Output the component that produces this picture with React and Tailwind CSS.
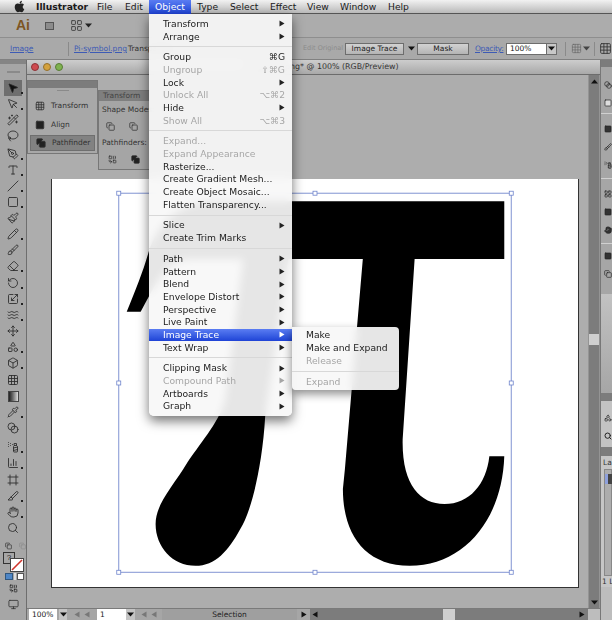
import React from "react";
import { FaApple } from "react-icons/fa";
import {
  MousePointer2, MousePointer, Wand2, Lasso, PenTool, Type, Slash, Square, Paintbrush, Pencil, Brush, Eraser,
  RotateCcw, Scaling, Waves, Move, Shapes, Box, Grid3x3, Pipette, Blend, SprayCan, ChartColumn, Frame, Slice, Hand, Search,
  Monitor, Copy, LayoutGrid, Combine,
} from "lucide-react";

const Tri = ({ c = "#222" }) => (
  <svg width="6" height="7" viewBox="0 0 6 7" className="shrink-0"><path d="M0.5 0.5 L5.5 3.5 L0.5 6.5Z" fill={c} /></svg>
);
const Down = ({ c = "#111" }) => (
  <svg width="7" height="5" viewBox="0 0 7 5" className="shrink-0"><path d="M0 0.5 H7 L3.5 4.5Z" fill={c} /></svg>
);
const Up = ({ c = "#111" }) => (
  <svg width="7" height="5" viewBox="0 0 7 5" className="shrink-0"><path d="M0 4.5 H7 L3.5 0.5Z" fill={c} /></svg>
);
const TriL = ({ c = "#222" }) => (
  <svg width="6" height="7" viewBox="0 0 6 7" className="shrink-0"><path d="M5.5 0.5 L0.5 3.5 L5.5 6.5Z" fill={c} /></svg>
);

const menuGroups = [
  [["Transform", "a"], ["Arrange", "a"]],
  [["Group", "⌘G"], ["Ungroup", "⇧⌘G", 1], ["Lock", "a"], ["Unlock All", "⌥⌘2", 1], ["Hide", "a"], ["Show All", "⌥⌘3", 1]],
  [["Expand...", "", 1], ["Expand Appearance", "", 1], ["Rasterize...", ""], ["Create Gradient Mesh...", ""], ["Create Object Mosaic...", ""], ["Flatten Transparency...", ""]],
  [["Slice", "a"], ["Create Trim Marks", ""]],
  [["Path", "a"], ["Pattern", "a"], ["Blend", "a"], ["Envelope Distort", "a"], ["Perspective", "a"], ["Live Paint", "a"], ["Image Trace", "a", 0, 1], ["Text Wrap", "a"]],
  [["Clipping Mask", "a"], ["Compound Path", "a", 1], ["Artboards", "a"], ["Graph", "a"]],
];

function Sep() {
  return <div className="h-[8px] flex items-center"><div className="h-px w-full bg-[#d8d8d8]" /></div>;
}

function MenuRow({ label, right, dis, active }) {
  const text = active ? "text-white" : dis ? "text-[#a6a6a6]" : "text-[#1c1c1c]";
  const bg = active ? "bg-gradient-to-b from-[#5a7cf2] to-[#1f42d6]" : "";
  return (
    <div className={`h-[12.7px] flex items-center justify-between pl-[14px] pr-[7px] ${text} ${bg}`}>
      <span>{label}</span>
      {right === "a" ? <Tri c={active ? "#fff" : dis ? "#a6a6a6" : "#222"} /> : <span className={dis ? "text-[#a6a6a6]" : "text-[#222]"}>{right}</span>}
    </div>
  );
}

function ObjectMenu() {
  return (
    <div className="absolute left-[149px] top-[14px] w-[143px] h-[402px] pt-[3.4px] rounded-b-[5px] bg-[#f8f8f8]/93 backdrop-blur-[4px] shadow-[0_5px_12px_rgba(0,0,0,0.55)] text-[9.2px] font-['DejaVu_Sans',sans-serif] z-20">
      {menuGroups.map((g, i) => (
        <React.Fragment key={i}>
          {i > 0 && <Sep />}
          {g.map((m) => <MenuRow key={m[0]} label={m[0]} right={m[1]} dis={m[2]} active={m[3]} />)}
        </React.Fragment>
      ))}
    </div>
  );
}

function SubMenu() {
  return (
    <div className="absolute left-[292px] top-[327px] w-[107px] h-[63px] pt-[2px] rounded-r-[4px] rounded-bl-[4px] bg-[#f8f8f8]/93 backdrop-blur-[4px] shadow-[0_4px_10px_rgba(0,0,0,0.45)] text-[9.2px] font-['DejaVu_Sans',sans-serif] z-20">
      <MenuRow label="Make" />
      <MenuRow label="Make and Expand" />
      <MenuRow label="Release" dis />
      <Sep />
      <MenuRow label="Expand" dis />
    </div>
  );
}

function MenuBar() {
  return (
    <div className="h-[14px] shrink-0 flex items-center bg-gradient-to-b from-[#f2f2f2] to-[#b9b9b9] border-b border-[#555] text-[9.2px] text-[#1a1a1a] font-['DejaVu_Sans',sans-serif] pl-[13px] z-10">
      <FaApple className="w-[13px] h-[13px] text-[#222]" />
      <span className="ml-[10px] font-bold w-[49px] whitespace-nowrap">Illustrator</span>
      <span className="ml-[12px] w-[16px]">File</span>
      <span className="ml-[12px] w-[17px]">Edit</span>
      <span className="ml-[7px] h-[14px] w-[42px] flex items-center justify-center text-white bg-gradient-to-b from-[#5a7cf2] to-[#1f42d6]">Object</span>
      <span className="ml-[6px] w-[21px]">Type</span>
      <span className="ml-[12px] w-[28px]">Select</span>
      <span className="ml-[12px] w-[25px]">Effect</span>
      <span className="ml-[12px] w-[21px]">View</span>
      <span className="ml-[12px] w-[36px]">Window</span>
      <span className="ml-[12px] w-[20px]">Help</span>
    </div>
  );
}

function AppBar() {
  return (
    <div className="h-[24px] shrink-0 flex items-center bg-[#acacac] border-b border-[#8e8e8e] pl-[16px]">
      <span className="text-[#7d5523] font-bold text-[14px] font-['Liberation_Sans',sans-serif] w-[29px]">Ai</span>
      <span className="w-[9px] h-[8px] border border-[#555] bg-[#8c8c8c]" />
      <span className="ml-[16px] flex items-center gap-[2px] text-[#444]"><LayoutGrid size={13} strokeWidth={1.8} /><Down c="#222" /></span>
    </div>
  );
}

function Btn({ className, children }) {
  return <div className={`h-[12px] flex items-center justify-center bg-gradient-to-b from-[#d2d2d2] to-[#b4b4b4] border border-[#6d6d6d] text-[7.5px] text-[#222] ${className}`}>{children}</div>;
}

function ControlBar() {
  return (
    <div className="h-[22px] shrink-0 flex items-center bg-[#a9a9a9] border-b border-[#808080] text-[7.5px] font-['DejaVu_Sans',sans-serif] text-[#333] pl-[10px] overflow-hidden">
      <span className="text-[#3d5bb5] underline w-[58px]">Image</span>
      <span className="w-px h-[14px] bg-[#8a8a8a]" />
      <span className="ml-[5px] text-[#3d5bb5] underline w-[54px] whitespace-nowrap">Pi-symbol.png</span>
      <span className="whitespace-nowrap w-[175px]">Transparent</span>
      <span className="whitespace-nowrap text-[#8c8c8c] text-[6.5px] w-[41px]">Edit Original</span>
      <span className="w-[1px]" />
      <Btn className="w-[59px]">Image Trace</Btn>
      <span className="ml-[4px] w-[9px]"><Down /></span>
      <Btn className="w-[52px]">Mask</Btn>
      <span className="ml-[6px] text-[#3d5bb5] underline w-[31px] tracking-[-0.3px]">Opacity:</span>
      <span className="h-[12px] w-[41px] bg-white border border-[#6d6d6d] text-[#222] pl-[3px] flex items-center">100%</span>
      <span className="h-[12px] w-[10px] bg-[#c8c8c8] border border-[#6d6d6d] border-l-0 flex items-center justify-center"><Down /></span>
      <span className="w-px h-[14px] bg-[#8a8a8a] ml-[8px]" />
      <span className="ml-[5px] flex items-center gap-[1px] text-[#666]"><Grid3x3 size={11} strokeWidth={1.4} /><Down c="#444" /></span>
      <span className="w-px h-[14px] bg-[#8a8a8a] ml-[4px]" />
      <span className="ml-[4px] text-[#333]"><Grid3x3 size={13} strokeWidth={1.6} /></span>
    </div>
  );
}

const groups = [
  { mt: "", tools: [[MousePointer2, 1, 1], [MousePointer, 1], [Wand2], [Lasso]] },
  { mt: "mt-[2px]", tools: [[PenTool, 1], [Type, 1], [Slash, 1], [Square, 1], [Paintbrush], [Pencil, 1], [Brush], [Eraser, 1]] },
  { mt: "mt-[1px]", tools: [[RotateCcw, 1], [Scaling, 1], [Waves, 1], [Move], [Shapes, 1], [Box, 1]] },
  { mt: "mt-[1px]", tools: [[Grid3x3], ["grad"], [Pipette, 1], [Blend]] },
  { mt: "mt-[3px]", tools: [[SprayCan, 1], [ChartColumn, 1]] },
  { mt: "mt-[1px]", tools: [[Frame], [Slice, 1], [Hand, 1], [Search]] },
];

function Toolbox() {
  return (
    <div className="w-[27px] shrink-0 bg-[#a6a6a6] border-r border-[#6e6e6e] flex flex-col">
      <div className="h-[4px] bg-[#858585]" />
      <div className="h-[16px] flex items-center justify-center"><div className="w-[13px] h-[2px] bg-[#8a8a8a]" /></div>
      {groups.map((g, i) => (
        <div key={i} className={g.mt}>
          {g.tools.map(([Ic, dot, sel], j) => (
            <div key={j} className={`relative h-[16px] mx-[4px] flex items-center justify-center text-[#2b2b2b] ${sel ? "bg-[#6f6f6f]" : ""}`}>
              {Ic === "grad" ? <span className="w-[11px] h-[11px] bg-gradient-to-r from-[#222] to-[#ddd] border border-[#444]" /> :
                <Ic size={12} strokeWidth={1.7} fill={sel ? "#111" : "none"} />}
              {dot && <span className="absolute right-[-1px] bottom-[2px] w-[2px] h-[2px] bg-[#222]" />}
            </div>
          ))}
        </div>
      ))}
      <div className="mt-[4px] pl-[5px] flex items-center gap-[7px] h-[11px]">
        <Copy size={8} className="text-[#222]" /><Copy size={8} className="text-[#888]" />
      </div>
      <div className="relative h-[24px] mt-[-1px]">
        <span className="absolute left-[3px] top-[2px] w-[12px] h-[12px] border border-[#333] bg-[#a6a6a6] text-[8px] leading-[10px] text-center text-[#222] font-['Liberation_Sans',sans-serif]">?</span>
        <svg className="absolute left-[10px] top-[8px]" width="14" height="14" viewBox="0 0 14 14">
          <rect x="0.5" y="0.5" width="13" height="13" fill="#fff" stroke="#444" />
          <path d="M2 12 L12 2" stroke="#d0342c" strokeWidth="1.6" />
        </svg>
      </div>
      <div className="h-[8px] pl-[5px] flex gap-[1px] mt-[-1px]">
        <span className="w-[8px] h-[7px] bg-[#4e86c6] border border-[#31577f]" />
        <span className="w-[2px] h-[7px] bg-[#ddd]" />
        <span className="w-[7px] h-[7px] bg-white border border-[#555]" />
      </div>
      <div className="h-[14px] flex items-center justify-center"><Combine size={9} className="text-[#222]" /></div>
      <div className="mt-[4px] flex justify-center text-[#333]"><Monitor size={11} strokeWidth={1.8} /></div>
    </div>
  );
}

function Artwork() {
  const hs = [[118, 193], [315, 193], [512, 193], [118, 383.5], [512, 383.5], [118, 573.5], [315, 573.5], [512, 573.5]];
  return (
    <svg className="absolute inset-0 w-full h-full" viewBox="51 179 528 409">
      <path
        fill="#000"
        d="M126 312 C135 290 143 270 148 252 C158 222 180 201 215 201 L505 201 L505 259 L415 259 L403 440 C402 485 420 505 445 505 C470 505 487 485 490 457 L505 457 C503 520 465 567 410 567 C365 567 343 535 343 490 L345 470 L363 259 L288 259 L265 417 C262 470 250 515 240 530 C228 552 215 567 195 567 C172 567 155 548 155 525 C155 505 172 488 187 463 C203 440 220 420 225 400 L243 259 L190 259 C165 259 155 285 140 312 Z"
      />
      <rect x="118" y="193" width="394" height="380.5" fill="none" stroke="#8093d2" strokeWidth="1" />
      {hs.map(([x, y], i) => (
        <rect key={i} x={x - 2} y={y - 2} width="4" height="4" fill="#fff" stroke="#6f84cc" strokeWidth="0.8" />
      ))}
    </svg>
  );
}

function StatusBar() {
  const Nav = ({ w }) => (
    <span className={`flex items-center justify-center gap-[4px] ${w}`}><span className="opacity-40 flex gap-[4px]"><TriL c="#333" /><TriL c="#333" /></span></span>
  );
  return (
    <div className="h-[12px] shrink-0 flex bg-[#a6a6a6] border-t border-[#7a7a7a] text-[7.5px] font-['DejaVu_Sans',sans-serif] text-[#222]">
      <span className="ml-[2px] w-[28px] bg-white pl-[3px] flex items-center">100%</span>
      <span className="ml-[2px] w-[8px] bg-[#c4c4c4] flex items-center justify-center"><Down /></span>
      <Nav w="w-[30px]" />
      <span className="w-[29px] bg-white pl-[3px] flex items-center">1</span>
      <span className="w-[9px] bg-[#c4c4c4] flex items-center justify-center"><Down /></span>
      <Nav w="w-[27px]" />
      <span className="w-[135px] bg-[#9f9f9f] flex items-center justify-center">Selection</span>
      <span className="w-[13px] flex items-center justify-center"><Tri c="#111" /></span>
      <span className="w-[278px] bg-[#7c7c7c] flex items-center pl-[2px] pr-[3px]">
        <TriL c="#111" />
        <span className="ml-[125px] w-[12px] h-full bg-[#cfcfcf]" />
        <span className="flex-1" />
        <Tri c="#111" />
      </span>
      <span className="flex-1 bg-[#bdbdbd]" />
    </div>
  );
}

function DocWindow() {
  return (
    <div className="flex-1 min-w-0 flex flex-col">
      <div className="h-[15px] shrink-0 relative flex items-center justify-center bg-gradient-to-b from-[#cdcdcd] to-[#a9a9a9] border-b border-[#6c6c6c] text-[7.9px] text-[#333] font-['DejaVu_Sans',sans-serif]">
        <span className="absolute left-[4px] flex gap-[4px]">
          <span className="w-[8px] h-[8px] rounded-full bg-[#cf4b50] border border-[#8d3338]" />
          <span className="w-[8px] h-[8px] rounded-full bg-[#d4a23f] border border-[#94702c]" />
          <span className="w-[8px] h-[8px] rounded-full bg-[#7fb24f] border border-[#587c36]" />
        </span>
        <span className="ml-[16px] whitespace-nowrap">Pi-symbol.png* @ 100% (RGB/Preview)</span>
      </div>
      <div className="flex-1 min-h-0 flex">
        <div className="flex-1 min-w-0 bg-[#adadad] pl-[24px] pt-[104px]">
          <div className="relative w-[528px] h-[409px] bg-white border-l border-b border-r border-[#333]">
            <Artwork />
          </div>
        </div>
        <div className="w-[12px] shrink-0 bg-[#7c7c7c] border-x border-[#949494] flex flex-col items-center pt-[4px] pb-[3px]">
          <Up />
          <span className="mt-[250px] w-full h-[11px] bg-[#cfcfcf]" />
          <span className="flex-1" />
          <Down />
        </div>
      </div>
      <StatusBar />
    </div>
  );
}

function DockIcon({ children }) {
  return <div className="h-[18px] pl-[3px] flex items-center text-[#222] overflow-hidden">{children}</div>;
}

function RightDock() {
  return (
    <div className="w-[12px] shrink-0 flex flex-col bg-[#a6a6a6] border-l border-[#777] overflow-hidden">
      <div className="h-[7px] bg-[#7c7c7c]" />
      <div className="pt-[9px] pb-[1px] border-b border-[#d0d0d0]">
        <DockIcon><Blend size={14} /></DockIcon>
        <DockIcon><Square size={14} fill="#ddd" /></DockIcon>
      </div>
      <div className="pt-[6px] pb-[4px] border-b border-[#d0d0d0]">
        <DockIcon><Square size={12} fill="#333" /></DockIcon>
        <DockIcon><Brush size={14} /></DockIcon>
        <DockIcon><SprayCan size={14} /></DockIcon>
      </div>
      <div className="pt-[6px] pb-[4px] border-b border-[#d0d0d0]">
        <DockIcon><LayoutGrid size={14} /></DockIcon>
        <DockIcon><Square size={12} fill="#333" /></DockIcon>
        <DockIcon><Hand size={14} fill="#333" /></DockIcon>
      </div>
      <div className="pt-[3px] h-[50px]">
        <DockIcon><Square size={12} fill="#333" /></DockIcon>
        <DockIcon><Copy size={14} /></DockIcon>
      </div>
      <div className="h-[99px] bg-gradient-to-b from-[#c2c2c2] to-[#a6a6a6]" />
      <div className="h-[8px] bg-[#7c7c7c]" />
      <div className="h-[46px] bg-[#c3c3c3] pt-[8px]">
        <DockIcon><Shapes size={14} /></DockIcon>
        <DockIcon><Search size={14} strokeWidth={3} /></DockIcon>
      </div>
      <div className="h-[9px] bg-[#7c7c7c]" />
      <div className="h-[131px] bg-[#c6c6c6] font-['DejaVu_Sans',sans-serif] text-[7.5px] text-[#333] flex flex-col">
        <div className="pl-[2px] h-[13px] flex items-center">La</div>
        <div className="ml-[3px] flex-1 bg-[#adadad] border border-[#888] pt-[4px]">
          <div className="h-[10px] bg-[#8ea0dc]"><span className="ml-[3px] block w-[6px] h-[10px] bg-[#444]" /></div>
        </div>
        <div className="pl-[1px] h-[11px] flex items-center whitespace-nowrap">1 L</div>
      </div>
      <div className="flex-1 bg-[#bdbdbd]" />
    </div>
  );
}

function Panels() {
  const font = "font-['DejaVu_Sans',sans-serif] text-[7.5px] text-[#333]";
  return (
    <>
      <div className={`absolute left-[98px] top-[90px] w-[52px] h-[80px] bg-[#a5a5a5] border border-[#777] z-10 ${font}`}>
        <div className="h-[10px] bg-[#7f7f7f] pl-[4px] flex items-center whitespace-nowrap text-[#444]">Transform</div>
        <div className="pl-[3px] mt-[3px] whitespace-nowrap">Shape Modes:</div>
        <div className="pl-[7px] mt-[5px] flex gap-[14px] h-[12px] items-center text-[#333]"><Copy size={9} /><Copy size={9} /></div>
        <div className="pl-[3px] mt-[5px] whitespace-nowrap">Pathfinders:</div>
        <div className="pl-[9px] mt-[5px] flex gap-[14px] h-[12px] items-center"><Combine size={9} /><Copy size={9} fill="#222" /></div>
      </div>
      <div className={`absolute left-[27px] top-[80px] w-[71px] h-[74px] bg-[#a8a8a8] border border-[#777] z-10 ${font}`}>
        <div className="h-[7px] bg-[#7c7c7c]" />
        <div className="h-[5px] flex items-center justify-center"><span className="w-[12px] h-px bg-[#8a8a8a]" /></div>
        <div className="h-[18px] pl-[7px] flex items-center gap-[6px] mt-[4px]"><Grid3x3 size={10} />Transform</div>
        <div className="h-[19px] pl-[7px] flex items-center gap-[6px]"><Square size={10} fill="#222" />Align</div>
        <div className="mx-[2px] h-[16px] pl-[5px] flex items-center gap-[6px] bg-[#828282] border border-[#6f6f6f] mt-[1px]"><Copy size={10} fill="#222" />Pathfinder</div>
      </div>
    </>
  );
}

export default function App() {
  return (
    <div className="relative w-[612px] h-[620px] overflow-hidden flex flex-col bg-[#a8a8a8] blur-[0.5px]">
      <MenuBar />
      <AppBar />
      <ControlBar />
      <div className="flex-1 min-h-0 flex">
        <Toolbox />
        <DocWindow />
        <RightDock />
      </div>
      <Panels />
      <ObjectMenu />
      <SubMenu />
    </div>
  );
}
